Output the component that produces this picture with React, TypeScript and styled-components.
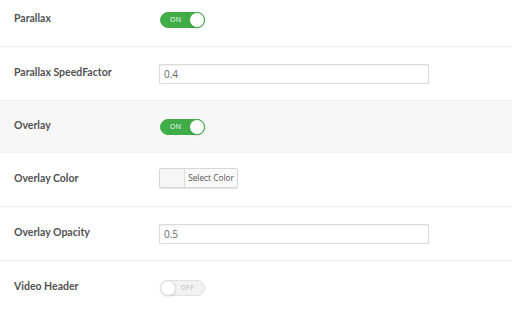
import React from "react";
import styled, { createGlobalStyle } from "styled-components";

const Global = createGlobalStyle`
  html, body { margin: 0; padding: 0; background: #fff; overflow: hidden; }
  body { font-family: "Open Sans", "Noto Sans", Arial, sans-serif; }
`;

const Page = styled.div`
  width: 512px;
  height: 312px;
  overflow: hidden;
`;

const List = styled.div`
  display: flex;
  flex-direction: column;
  margin-top: -7px;
`;

const Row = styled.div<{ $shaded?: boolean }>`
  display: grid;
  grid-template-columns: 159px 1fr;
  align-items: center;
  height: ${(p) => (p.$shaded ? "51px" : "53px")};
  border-bottom: 1px solid ${(p) => (p.$shaded ? "#f2f2f2" : "#eeeeee")};
  background: ${(p) => (p.$shaded ? "#f7f7f7" : "#fff")};
`;

const Label = styled.div`
  padding-left: 14px;
  font-family: Lato, "Open Sans", sans-serif;
  font-size: 10.5px;
  font-weight: 700;
  color: #525252;
  margin-top: -3px;
`;

const Toggle = styled.div<{ $on: boolean }>`
  position: relative;
  width: 45px;
  height: 16px;
  margin-left: 1px;
  border-radius: 9px;
  box-sizing: border-box;
  background: ${(p) => (p.$on ? "#40ad48" : "#f0f0f0")};
  border: 1px solid ${(p) => (p.$on ? "#40ad48" : "#dcdcdc")};
  opacity: ${(p) => (p.$on ? 1 : 0.85)};
  display: flex;
  align-items: center;
`;

const ToggleText = styled.span<{ $on: boolean }>`
  position: absolute;
  top: 0;
  bottom: 0;
  ${(p) => (p.$on ? "left: 9px;" : "right: 10px;")}
  display: flex;
  align-items: center;
  font-size: 7px;
  font-weight: 400;
  letter-spacing: 0.2px;
  color: ${(p) => (p.$on ? "#fff" : "#b0b0b0")};
`;

const Knob = styled.span<{ $on: boolean }>`
  position: absolute;
  top: -1px;
  ${(p) => (p.$on ? "right: -1px;" : "left: -1px;")}
  width: 16px;
  height: 16px;
  border-radius: 50%;
  background: #fff;
  box-sizing: border-box;
  border: 1px solid ${(p) => (p.$on ? "#40ad48" : "#d8d8d8")};
  box-shadow: 0 1px 2px rgba(0, 0, 0, 0.12);
`;

const TextInput = styled.div`
  width: 270px;
  height: 20px;
  box-sizing: border-box;
  border: 1px solid #dcdcdc;
  box-shadow: inset 0 1px 2px rgba(0, 0, 0, 0.06);
  background: #fff;
  display: flex;
  align-items: center;
  padding-left: 4px;
  font-size: 10px;
  color: #666;
`;

const ColorButton = styled.div`
  display: flex;
  width: 79px;
  height: 20px;
  margin-top: -4px;
  box-sizing: border-box;
  border: 1px solid #d6d6d6;
  border-radius: 2px;
  background: #f7f7f7;
  box-shadow: 0 1px 0 #e6e6e6;
  overflow: hidden;
`;

const Swatch = styled.span`
  width: 24px;
  border-right: 1px solid #dcdcdc;
  background: #f6f6f6;
`;

const ColorText = styled.span`
  flex: 1;
  display: flex;
  align-items: center;
  justify-content: center;
  font-size: 8.3px;
  color: #555;
  background: #f9f9f9;
`;

const Switch = ({ on }: { on: boolean }) => (
  <Toggle $on={on}>
    <ToggleText $on={on}>{on ? "ON" : "OFF"}</ToggleText>
    <Knob $on={on} />
  </Toggle>
);

export default function App() {
  return (
    <Page>
      <Global />
      <List>
        <Row>
          <Label>Parallax</Label>
          <Switch on />
        </Row>
        <Row>
          <Label>Parallax SpeedFactor</Label>
          <TextInput>0.4</TextInput>
        </Row>
        <Row $shaded>
          <Label>Overlay</Label>
          <Switch on />
        </Row>
        <Row>
          <Label>Overlay Color</Label>
          <ColorButton>
            <Swatch />
            <ColorText>Select Color</ColorText>
          </ColorButton>
        </Row>
        <Row>
          <Label>Overlay Opacity</Label>
          <TextInput>0.5</TextInput>
        </Row>
        <Row>
          <Label>Video Header</Label>
          <Switch on={false} />
        </Row>
      </List>
    </Page>
  );
}
